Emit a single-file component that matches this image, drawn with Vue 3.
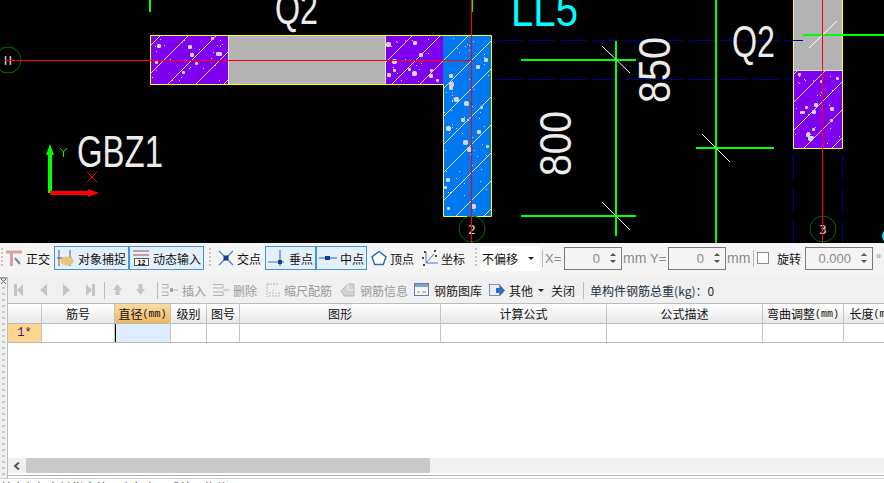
<template>
  <div class="page">
    <svg class="cad" width="884" height="243" viewBox="0 0 884 243">
      <defs>
        <pattern id="hatch" width="28" height="28" patternUnits="userSpaceOnUse">
          <path d="M-1 29L29 -1" stroke="#dedede" stroke-width="1" fill="none" shape-rendering="crispEdges" />
        </pattern>
      </defs>

      <!-- wall fills -->
      <rect x="151" y="36" width="78" height="48" fill="#7f00ef" />
      <rect x="229" y="36" width="156" height="48" fill="#b3b3b3" />
      <rect x="385" y="36" width="58" height="48" fill="#7f00ef" />
      <rect x="443" y="36" width="48" height="180" fill="#0078ef" />
      <rect x="794" y="0" width="48" height="70" fill="#b3b3b3" />
      <rect x="794" y="70" width="48" height="78" fill="#7f00ef" />
      <rect x="151" y="36" width="78" height="48" fill="url(#hatch)" />
      <rect x="385" y="36" width="58" height="48" fill="url(#hatch)" />
      <rect x="443" y="36" width="48" height="180" fill="url(#hatch)" />
      <rect x="794" y="70" width="48" height="78" fill="url(#hatch)" />
      <rect
        v-for="(d, i) in dots"
        :key="i"
        :x="d.x"
        :y="d.y"
        :width="d.s"
        :height="d.s"
        :rx="d.s > 1 ? d.s / 3 : 0"
        fill="#d6d6d6"
      />
      <path d="M228.500 36V84M385.500 36V84M794 70.500H842" stroke="#e8e8e8" stroke-width="1" />
      <path
        d="M150.500 35.500H491.500V216.500H443.500V84.500H150.500Z"
        fill="none"
        stroke="#ffff00"
        stroke-width="1"
      />
      <path d="M793.500 0V148.500H842.500V0" fill="none" stroke="#ffff00" stroke-width="1" />

      <!-- dashed blue axes -->
      <path
        d="M497 40.500H803M497 79.500H793M793.500 155V243M842.500 155V243"
        stroke="#00008c"
        stroke-width="1"
        stroke-dasharray="26 6"
        fill="none"
      />

      <!-- green dimension lines -->
      <g stroke="#00ff00" fill="none" stroke-width="2">
        <path d="M150 0V12M472 0V12" />
        <path d="M521 60H636M521 216H636M616 41V236" />
        <path d="M716 0V243M696 148H774M803 35H884" />
      </g>
      <path
        d="M602 46L630 73M602 202L630 230M702 134L730 162M809 48L837 21"
        stroke="#ffffff"
        stroke-width="1"
        fill="none"
      />

      <!-- axis bubbles -->
      <g fill="none" stroke="#007000" stroke-width="1">
        <circle cx="8" cy="60" r="13" />
        <circle cx="472" cy="229" r="13" />
        <circle cx="823" cy="229" r="13" />
      </g>
      <circle cx="890" cy="236" r="8" fill="#00e5ff" />
      <text class="bubble" x="8" y="65">H</text>
      <text class="bubble" x="472" y="234">2</text>
      <text class="bubble" x="823" y="234">3</text>

      <!-- labels -->
      <text class="label" x="275" y="24" font-size="44" textLength="43" lengthAdjust="spacingAndGlyphs">Q2</text>
      <text class="label" x="732" y="57" font-size="44" textLength="43" lengthAdjust="spacingAndGlyphs">Q2</text>
      <text class="label cyan" x="511" y="26" font-size="46" textLength="67" lengthAdjust="spacingAndGlyphs">LL5</text>
      <text class="label" x="77" y="167" font-size="44" textLength="86" lengthAdjust="spacingAndGlyphs">GBZ1</text>
      <text class="label" font-size="45" transform="translate(571 176) rotate(-90)" textLength="65" lengthAdjust="spacingAndGlyphs">800</text>
      <text class="label" font-size="45" transform="translate(670 103) rotate(-90)" textLength="66" lengthAdjust="spacingAndGlyphs">850</text>

      <!-- red axes -->
      <path d="M5 60.500H471M471.500 0V243M822.500 0V243" stroke="#ff0000" stroke-width="1" fill="none" />

      <!-- ucs marker -->
      <path d="M50 193V154" stroke="#00ff00" stroke-width="4" />
      <path d="M50 144L54 155H46Z" fill="#00ff00" />
      <path d="M50 193H89" stroke="#ff0000" stroke-width="4" />
      <path d="M99 193L88 189V197Z" fill="#ff0000" />
      <path d="M60 148L63.500 152L67 148M63.500 152V157" stroke="#00ff00" fill="none" />
      <path d="M87 172L97 182M97 172L87 182" stroke="#ff0000" fill="none" />
    </svg>

    <div class="toolbar">
      <span class="grip" />
      <div class="tool t-ortho">
        <svg width="18" height="18" viewBox="0 0 18 18">
          <path d="M0 3H16M5.500 3V17" stroke="#dba0a0" stroke-width="3" fill="none" />
          <path d="M9 9L14 15" stroke="#6f86a8" stroke-width="2" />
        </svg>
        <span>正交</span>
      </div>
      <div class="tool on w-snap">
        <svg width="18" height="18" viewBox="0 0 18 18">
          <path d="M2 1V17M13 1V17" stroke="#a04545" />
          <path d="M0 9H15" stroke="#3a5a90" />
          <ellipse cx="10" cy="12" rx="6.500" ry="4.500" fill="#e3c878" />
        </svg>
        <span>对象捕捉</span>
      </div>
      <div class="tool on w-input">
        <svg width="18" height="18" viewBox="0 0 18 18">
          <path d="M1 2H17M1 6H17" stroke="#a05050" />
          <rect x="2.500" y="9.500" width="14" height="7" fill="#fff" stroke="#555" />
          <text x="9.500" y="15.500" class="mini">12</text>
        </svg>
        <span>动态输入</span>
      </div>
      <span class="grip g-a" />
      <div class="tool m-cross">
        <svg width="16" height="16" viewBox="0 0 16 16">
          <path d="M1 1L15 15M15 1L1 15" stroke="#3a7bd5" stroke-width="1.200" />
          <rect x="5.500" y="5.500" width="5" height="5" fill="#123f8c" />
        </svg>
        <span>交点</span>
      </div>
      <div class="tool on w-pt m-foot">
        <svg width="18" height="16" viewBox="0 0 18 16">
          <path d="M0 12H16M12 0V16" stroke="#3a7bd5" stroke-width="1.200" />
          <rect x="10" y="10" width="4" height="4" fill="#123f8c" />
        </svg>
        <span>垂点</span>
      </div>
      <div class="tool on w-pt">
        <svg width="18" height="16" viewBox="0 0 18 16">
          <path d="M0 8H18" stroke="#3a7bd5" stroke-width="1.200" />
          <rect x="6" y="6" width="5" height="4" fill="#123f8c" />
        </svg>
        <span>中点</span>
      </div>
      <div class="tool m-vertex">
        <svg width="16" height="16" viewBox="0 0 16 16">
          <path d="M8 1.500L15 6.800L12.300 14.500H3.700L1 6.800Z" fill="#fff" stroke="#2f6fc0" stroke-width="1.500" />
        </svg>
        <span>顶点</span>
      </div>
      <div class="tool m-coord">
        <svg width="18" height="18" viewBox="0 0 18 18">
          <path d="M5 3V14H17M5 14L13 5" stroke="#3a7bd5" fill="none" />
          <path d="M3 2h2v2H3zM13 1h2v2h-2zM1 8h2v2H1zM2 15h2v2H2zM14 6h2v2h-2z" fill="#444" />
        </svg>
        <span>坐标</span>
      </div>
      <span class="grip g-b" />
      <div class="select">
        <span>不偏移</span>
        <i class="caret" />
      </div>
      <span class="vsep" />
      <span class="muted xlabel">X=</span>
      <div class="spin s-x">
        <span>0</span>
        <div class="arrows"><i class="up" /><i class="down" /></div>
      </div>
      <span class="muted unit">mm</span>
      <span class="muted ylabel">Y=</span>
      <div class="spin s-x">
        <span>0</span>
        <div class="arrows"><i class="up" /><i class="down" /></div>
      </div>
      <span class="muted unit">mm</span>
      <span class="vsep v-rot" />
      <span class="check" />
      <span class="rot">旋转</span>
      <div class="spin s-rot">
        <span>0.000</span>
        <div class="arrows"><i class="up" /><i class="down" /></div>
      </div>
      <span class="muted deg">°</span>
    </div>

    <div class="panel">
      <div class="handle">
        <svg width="7" height="8" viewBox="0 0 7 8">
          <path d="M0 1H7" stroke="#555" />
          <path d="M1 2L6 7M6 2L1 7" stroke="#666" />
        </svg>
      </div>
      <div class="body">
        <div class="bar">
          <svg width="81" height="14" viewBox="0 0 81 14">
            <path
              fill="#c4c4c4"
              d="M0 1h3v12H0zM9 1v12L3 7zM33 1v12L26 7zM49 1v12l7-6zM72 1v12l6-6zM78 1h3v12h-3z"
            />
          </svg>
          <span class="vsep b-a" />
          <svg width="32" height="12" viewBox="0 0 32 12">
            <path d="M4.500 0L9 6H6.500V11H2.500V6H0ZM27.500 11L23 5H25.500V0H29.500V5H32Z" fill="#c4c4c4" />
          </svg>
          <span class="vsep b-b" />
          <div class="act">
            <svg width="16" height="14" viewBox="0 0 16 14">
              <path d="M0 1.500H6V5H0M0 9H6V12.500H0M9 7H16" stroke="#b0b0b0" fill="none" />
              <rect x="8" y="5" width="3" height="4" fill="#9aa7b8" />
            </svg>
            <span>插入</span>
          </div>
          <div class="act i-del">
            <svg width="16" height="14" viewBox="0 0 16 14">
              <path d="M0 1.500H10V5H0M0 9H10V12.500H0M10 7H16" stroke="#b0b0b0" fill="none" />
            </svg>
            <span>删除</span>
          </div>
          <div class="act i-scale">
            <svg width="14" height="15" viewBox="0 0 14 15">
              <path d="M1 1V14M1 1H13M4 14V9M7 14V7M10 14V10M13 14V8" stroke="#b4b4b4" stroke-dasharray="2 1" fill="none" />
            </svg>
            <span>缩尺配筋</span>
          </div>
          <div class="act wide i-info">
            <svg width="15" height="15" viewBox="0 0 15 15">
              <path d="M1 8L8 1H14V13H4Z" fill="#d2d2d2" stroke="#b4b4b4" />
              <path d="M8 1V7H14" stroke="#eee" fill="none" />
            </svg>
            <span>钢筋信息</span>
          </div>
          <div class="act wide live i-lib">
            <svg width="15" height="14" viewBox="0 0 15 14">
              <rect x="0.500" y="0.500" width="14" height="12" fill="#f4f6fa" stroke="#5a7fae" />
              <rect x="1" y="1" width="13" height="3" fill="#7ea3d0" />
              <path d="M3 9H6" stroke="#d07a3a" />
              <path d="M8 9H12" stroke="#7a9a5a" />
            </svg>
            <span>钢筋图库</span>
          </div>
          <div class="act live i-other">
            <svg width="16" height="15" viewBox="0 0 16 15">
              <rect x="0.500" y="1.500" width="10" height="11" fill="#e8eef6" stroke="#7d8ea6" />
              <path d="M7 5H11V2L16 7.500L11 13V10H7Z" fill="#2f6fc0" />
            </svg>
            <span>其他</span>
            <i class="caret small" />
          </div>
          <span class="close">关闭</span>
          <span class="vsep b-c" />
          <span class="total">单构件钢筋总重(kg)：0</span>
        </div>

        <div class="grid head">
          <div v-for="(c, i) in columns" :key="i" class="hcell" :class="{ hot: i === 2 }">
            {{ c.name }}<span v-if="c.unit" class="mm">(mm)</span>
          </div>
        </div>
        <div class="grid row">
          <div
            v-for="(c, i) in columns"
            :key="i"
            class="cell"
            :class="{ num: i === 0, active: i === 2 }"
          >{{ i === 0 ? "1*" : "" }}</div>
        </div>

        <div class="blank" />

        <div class="scroll">
          <span class="left">
            <svg width="8" height="8" viewBox="0 0 8 8">
              <path d="M6 0.500L2 4L6 7.500" stroke="#555" stroke-width="2" fill="none" />
            </svg>
          </span>
          <span class="thumb" />
        </div>
        <div class="rule" />
      </div>
    </div>

    <div class="status">单击鼠标左键指定第一个角点，或拾取构件图元</div>
  </div>
</template>

<script setup>
const columns = [
  { name: "" },
  { name: "筋号" },
  { name: "直径", unit: true },
  { name: "级别" },
  { name: "图号" },
  { name: "图形" },
  { name: "计算公式" },
  { name: "公式描述" },
  { name: "弯曲调整", unit: true },
  { name: "长度", unit: true },
];

// Manchas del hatch: pseudoaleatorio con semilla fija
let seed = 20240611;
const rnd = () => {
  seed = (seed + 0x6d2b79f5) | 0;
  let t = Math.imul(seed ^ (seed >>> 15), 1 | seed);
  t = (t + Math.imul(t ^ (t >>> 7), 61 | t)) ^ t;
  return ((t ^ (t >>> 14)) >>> 0) / 4294967296;
};

const regions = [
  [152, 37, 76, 46, 34],
  [386, 37, 56, 46, 26],
  [444, 37, 46, 178, 80],
  [795, 71, 46, 76, 36],
];

const dots = [];
for (const [x, y, w, h, n] of regions) {
  for (let i = 0; i < n; i++) {
    const big = rnd() > 0.72;
    const s = big ? 3 + Math.floor(rnd() * 3) : 1;
    dots.push({
      x: x + Math.floor(rnd() * (w - s)),
      y: y + Math.floor(rnd() * (h - s)),
      s,
    });
  }
}
</script>

<style scoped>
.page {
  width: 884px;
  height: 483px;
  overflow: hidden;
  display: flex;
  flex-direction: column;
  background: #f0f0f0;
  font-family: "Noto Sans CJK SC", "Liberation Sans", sans-serif;
  font-size: 12px;
  color: #111;
}

.cad {
  display: block;
  flex: none;
  background: #000;
}

.bubble {
  fill: #d8d8d8;
  font-family: "DejaVu Sans Mono", monospace;
  font-size: 13px;
  text-anchor: middle;
}

.label {
  fill: #ececec;
  font-family: "Liberation Sans", sans-serif;
}

.cyan {
  fill: #00ffff;
}

.mini {
  font-family: "Liberation Sans", sans-serif;
  font-size: 7px;
  font-weight: 700;
  text-anchor: middle;
}

/* fila 1 */
.toolbar {
  flex: none;
  height: 34px;
  display: flex;
  align-items: center;
  padding-bottom: 4px;
  box-sizing: border-box;
  background: #f4f4f4;
  white-space: nowrap;
}

.toolbar > * {
  flex: none;
}

.grip {
  width: 2px;
  height: 20px;
  margin-left: 1px;
  margin-right: 3px;
  background: repeating-linear-gradient(#c8c8c8 0 2px, transparent 2px 4px);
}

.g-a {
  margin-left: 5px;
  margin-right: 7px;
}

.g-b {
  margin-left: 10px;
  margin-right: 3px;
}

.tool {
  display: flex;
  align-items: center;
  gap: 2px;
  height: 24px;
  box-sizing: border-box;
}

.tool.on {
  justify-content: center;
  border: 1px solid #3f97e8;
  background: #e6f0fb;
  gap: 3px;
}

.w-snap {
  width: 75px;
  margin-left: 4px;
}

.w-input {
  width: 75px;
}

.w-pt {
  width: 51px;
}

.m-cross {
  gap: 3px;
}

.m-foot {
  margin-left: 4px;
}

.m-vertex {
  margin-left: 4px;
  gap: 3px;
}

.m-coord {
  margin-left: 7px;
  gap: 2px;
}

.select {
  width: 60px;
  height: 25px;
  padding: 0 6px 0 2px;
  box-sizing: border-box;
  display: flex;
  align-items: center;
  justify-content: space-between;
  background: #fff;
}

.caret {
  width: 0;
  height: 0;
  border: 3px solid transparent;
  border-top: 3px solid #222;
  border-bottom: 0;
}

.caret.small {
  margin-left: 1px;
}

.vsep {
  flex: none;
  width: 1px;
  height: 17px;
  margin: 0 2px;
  background: #bcbcbc;
}

.v-rot {
  margin: 0 3px 0 2px;
}

.muted {
  color: #8a8a8a;
  font-family: "Liberation Sans", sans-serif;
  font-size: 13px;
}

.xlabel {
  width: 19px;
}

.ylabel {
  width: 18px;
  margin-left: 3px;
}

.unit {
  width: 24px;
  margin-left: 1px;
  font-size: 14px;
}

.spin {
  height: 23px;
  box-sizing: border-box;
  display: flex;
  align-items: center;
  justify-content: flex-end;
  border: 1px solid #7a7a7a;
  color: #8a8a8a;
  font-family: "Liberation Sans", sans-serif;
  font-size: 13px;
}

.s-x {
  width: 58px;
}

.s-rot {
  width: 68px;
  margin-left: 4px;
}

.arrows {
  width: 17px;
  height: 100%;
  margin-left: 4px;
  display: flex;
  flex-direction: column;
  align-items: center;
  justify-content: space-around;
  padding: 3px 0;
  box-sizing: border-box;
}

.up,
.down {
  width: 0;
  height: 0;
  border: 3px solid transparent;
}

.up {
  border-top: 0;
  border-bottom: 3px solid #555;
}

.down {
  border-bottom: 0;
  border-top: 3px solid #555;
}

.check {
  width: 10px;
  height: 10px;
  border: 1px solid #8c8c8c;
  background: #fff;
}

.rot {
  margin-left: 8px;
}

.deg {
  margin-left: 3px;
}

/* panel */
.panel {
  flex: none;
  height: 201px;
  display: flex;
}

.handle {
  flex: none;
  width: 8px;
  border-right: 1px solid #bdbdbd;
  box-sizing: border-box;
  background: repeating-linear-gradient(#f0f0f0 0 4px, #c9c9c9 4px 6px) 2px 0 / 3px 100% no-repeat;
}

.handle svg {
  display: block;
  background: #f0f0f0;
}

.body {
  flex: 1;
  min-width: 0;
  display: flex;
  flex-direction: column;
  background: #fff;
}

.bar {
  flex: none;
  height: 26px;
  display: flex;
  align-items: center;
  padding-left: 6px;
  background: #f0f0f0;
  color: #9a9a9a;
  white-space: nowrap;
}

.b-a {
  margin: 0 8px 0 9px;
}

.b-b {
  margin: 0 4px 0 12px;
}

.b-c {
  margin: 0 6px 0 8px;
}

.act {
  display: flex;
  align-items: center;
  gap: 4px;
}

.act.wide {
  gap: 5px;
}

.live,
.close {
  color: #1a1a1a;
}

.i-del {
  margin-left: 7px;
}

.i-scale {
  margin-left: 9px;
}

.i-info {
  margin-left: 8px;
}

.i-lib {
  margin-left: 6px;
}

.i-other {
  margin-left: 7px;
}

.close {
  margin-left: 7px;
}

.total {
  color: #22303f;
}

.grid {
  flex: none;
  display: grid;
  grid-template-columns: 34px 73px 56px 36px 33px 201px 166px 156px 81px 60px;
}

.head {
  height: 21px;
  border-top: 1px solid #bcbcbc;
  box-sizing: border-box;
}

.hcell {
  display: flex;
  align-items: center;
  justify-content: center;
  border-right: 1px solid #c4c4c4;
  border-bottom: 1px solid #bcbcbc;
  background: linear-gradient(#ffffff, #e9e9e9);
  white-space: nowrap;
  overflow: hidden;
}

.mm {
  padding-top: 2px;
  font-family: "Liberation Mono", monospace;
  font-size: 10px;
}

.hot {
  background: linear-gradient(#fbdca3, #f0b860);
}

.row {
  height: 19px;
}

.cell {
  border-right: 1px solid #c4c4c4;
  border-bottom: 1px solid #bcbcbc;
  background: #fff;
}

.num {
  display: flex;
  align-items: center;
  justify-content: center;
  background: #ffd68f;
  color: #5a0a6a;
  font-family: "Liberation Mono", monospace;
}

.active {
  background: #deecfb;
  box-shadow: inset 1px 0 0 #000;
}

.blank {
  flex: 1;
}

.scroll {
  flex: none;
  height: 15px;
  display: flex;
  background: #f0f0f0;
}

.left {
  width: 18px;
  display: flex;
  align-items: center;
  justify-content: center;
}

.thumb {
  width: 404px;
  background: #c9c9c9;
}

.rule {
  flex: none;
  height: 1px;
  margin: 2px 0;
  background: #b4b4b4;
}

.status {
  flex: 1;
  min-height: 0;
  overflow: hidden;
  padding-top: 2px;
  box-sizing: border-box;
  border-top: 1px solid #cfcfcf;
  background: #fff;
  line-height: 14px;
  white-space: nowrap;
}
</style>
